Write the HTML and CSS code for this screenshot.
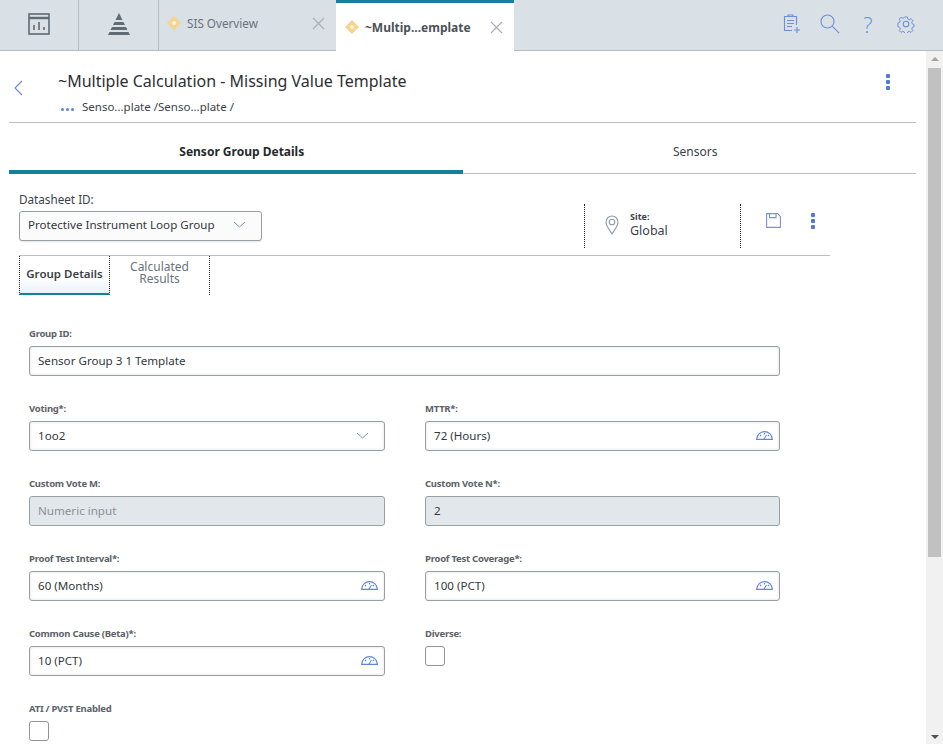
FILE: index.html
```html
<!DOCTYPE html>
<html lang="en">
<head>
    <meta charset="UTF-8">
    <meta name="viewport" content="width=device-width, initial-scale=1.0">
    <title>Sensor Group Details</title>
    <link rel="stylesheet" href="styles.css">
</head>
<body>

    <header class="top-bar">
        <div class="icon-tab">
            <svg width="22" height="22" viewBox="0 0 22 22" fill="none" stroke="#5f6b75" stroke-width="1.6"><rect x="1" y="1" width="20" height="20"/><path d="M1 5h20" stroke-width="2.400"/><path d="M6 17v-5M11 17V9M16 17v-3"/></svg>
        </div>
        <div class="icon-tab icon-tab-second">
            <svg width="24" height="22" viewBox="0 0 24 22" fill="#5f6b75"><path d="M12 0l3.500 7h-7z"/><path d="M7.500 9h9l1.500 3H6zM5 14h14l1.500 3h-17zM2.500 19h19l1.500 3H1z"/></svg>
        </div>
        <div class="doc-tab">
            <svg class="diamond" width="16" height="16" viewBox="0 0 16 16"><path d="M8 1l7 7-7 7-7-7z" fill="#f6d48c"/><circle cx="8" cy="8" r="2" fill="#fdf6e6"/></svg>
            <span class="doc-tab-name">SIS Overview</span>
            <svg class="close-x" width="13" height="13" viewBox="0 0 13 13" stroke="#a9b1b8" stroke-width="1.2"><path d="M1 1l11 11M12 1L1 12"/></svg>
        </div>
        <div class="doc-tab doc-tab-active">
            <svg class="diamond" width="16" height="16" viewBox="0 0 16 16"><path d="M8 1l7 7-7 7-7-7z" fill="#f6d48c"/><circle cx="8" cy="8" r="2" fill="#fdf6e6"/></svg>
            <span class="doc-tab-name">~Multip...emplate</span>
            <svg class="close-x" width="13" height="13" viewBox="0 0 13 13" stroke="#a9b1b8" stroke-width="1.2"><path d="M1 1l11 11M12 1L1 12"/></svg>
        </div>
        <div class="top-actions">
            <span class="top-action"><svg width="18" height="20" viewBox="0 0 18 20" fill="none" stroke="#6c8fd6" stroke-width="1.1"><path d="M9 16.500H1.500V2.500h12V11"/><path d="M5 2.500V1h5v1.500M4 6.500h7M4 9.500h7M4 12.500h5"/><path d="M14 13v6M11 16h6"/></svg></span>
            <span class="top-action"><svg width="20" height="20" viewBox="0 0 20 20" fill="none" stroke="#6c8fd6" stroke-width="1.1"><circle cx="7.500" cy="7.500" r="6.500"/><path d="M12.200 12.200l7 7"/></svg></span>
            <span class="top-action help-mark">?</span>
            <span class="top-action"><svg width="18" height="18" viewBox="0 0 18 18" fill="none" stroke="#6c8fd6" stroke-width="1.1"><circle cx="9" cy="9" r="2.800"/><path d="M7.500 1h3l.5 2.300 1.700.8 2-1.200 2 2.200-1.200 2 .6 1.700 2 .6v2.800l-2 .6-.6 1.700 1.200 2-2 2-2-1.200-1.700.7-.5 2.200h-3l-.5-2.200-1.700-.7-2 1.200-2-2 1.200-2-.7-1.700-2-.6V7.800l2-.6.7-1.700-1.200-2 2-2.200 2 1.200 1.700-.8z" transform="translate(1.100 1.100) scale(.88)"/></svg></span>
        </div>
    </header>

    <div class="page-wrap">
        <main class="content">
            <div class="title-row">
                <svg class="back-arrow" width="10" height="16" viewBox="0 0 10 16" fill="none" stroke="#6c8fd6" stroke-width="1.2"><path d="M9 1L2 8l7 7"/></svg>
                <div class="title-text">
                    <h1>~Multiple Calculation - Missing Value Template</h1>
                    <div class="breadcrumb">
                        <span class="crumb-dots"><i></i><i></i><i></i></span>
                        <span>Senso...plate /Senso...plate /</span>
                    </div>
                </div>
                <span class="kebab kebab-title"><i></i><i></i><i></i></span>
            </div>

            <nav class="main-tabs">
                <div class="main-tab main-tab-active">Sensor Group Details</div>
                <div class="main-tab">Sensors</div>
            </nav>

            <div class="sheet-bar">
                <div class="sheet-select-wrap">
                    <label class="sheet-label">Datasheet ID:</label>
                    <div class="field sheet-select">
                        <span>Protective Instrument Loop Group</span>
                        <svg class="chevron" width="13" height="7" viewBox="0 0 13 7" fill="none" stroke="#7d8fc4" stroke-width="1"><path d="M1 1l5.500 5L12 1"/></svg>
                    </div>
                </div>
                <div class="site-box">
                    <svg width="14" height="20" viewBox="0 0 14 20" fill="none" stroke="#8d9aa6" stroke-width="1.1"><path d="M7 19C4 14 1 11 1 7a6 6 0 0 1 12 0c0 4-3 7-6 12z"/><circle cx="7" cy="7" r="2.800"/></svg>
                    <div>
                        <div class="site-label">Site:</div>
                        <div class="site-value">Global</div>
                    </div>
                </div>
                <div class="sheet-actions">
                    <svg width="15" height="15" viewBox="0 0 15 15" fill="none" stroke="#7f8fdc" stroke-width="1.1"><path d="M.6.6h11l2.800 2.800v11H.6z"/><path d="M3.500.6v4h6.500v-4"/></svg>
                    <span class="kebab"><i></i><i></i><i></i></span>
                </div>
            </div>

            <div class="sub-tabs">
                <div class="sub-tab sub-tab-active">Group Details</div>
                <div class="sub-tab">Calculated<br>Results</div>
            </div>

            <form class="form-grid">
                <div class="form-item form-item-wide">
                    <label>Group ID:</label>
                    <div class="field"><span>Sensor Group 3 1 Template</span></div>
                </div>

                <div class="form-item">
                    <label>Voting*:</label>
                    <div class="field">
                        <span>1oo2</span>
                        <svg class="chevron" width="13" height="7" viewBox="0 0 13 7" fill="none" stroke="#7d8fc4" stroke-width="1"><path d="M1 1l5.500 5L12 1"/></svg>
                    </div>
                </div>
                <div class="form-item">
                    <label>MTTR*:</label>
                    <div class="field">
                        <span>72 (Hours)</span>
                        <svg class="gauge" width="17" height="9" viewBox="0 0 17 9" fill="none" stroke="#5f86dc" stroke-width="1.1"><path d="M.6 8.400C1 3.500 4.500.6 8.500.6s7.500 2.900 7.900 7.800zM4 4l1.200 1M8.500 2v1.500M13 4l-1.200 1M8 8l2.500-4"/></svg>
                    </div>
                </div>

                <div class="form-item">
                    <label>Custom Vote M:</label>
                    <div class="field field-disabled"><span class="placeholder">Numeric input</span></div>
                </div>
                <div class="form-item">
                    <label>Custom Vote N*:</label>
                    <div class="field field-disabled"><span>2</span></div>
                </div>

                <div class="form-item">
                    <label>Proof Test Interval*:</label>
                    <div class="field">
                        <span>60 (Months)</span>
                        <svg class="gauge" width="17" height="9" viewBox="0 0 17 9" fill="none" stroke="#5f86dc" stroke-width="1.1"><path d="M.6 8.400C1 3.500 4.500.6 8.500.6s7.500 2.900 7.900 7.800zM4 4l1.200 1M8.500 2v1.500M13 4l-1.200 1M8 8l2.500-4"/></svg>
                    </div>
                </div>
                <div class="form-item">
                    <label>Proof Test Coverage*:</label>
                    <div class="field">
                        <span>100 (PCT)</span>
                        <svg class="gauge" width="17" height="9" viewBox="0 0 17 9" fill="none" stroke="#5f86dc" stroke-width="1.1"><path d="M.6 8.400C1 3.500 4.500.6 8.500.6s7.500 2.900 7.900 7.800zM4 4l1.200 1M8.500 2v1.500M13 4l-1.200 1M8 8l2.500-4"/></svg>
                    </div>
                </div>

                <div class="form-item">
                    <label>Common Cause (Beta)*:</label>
                    <div class="field">
                        <span>10 (PCT)</span>
                        <svg class="gauge" width="17" height="9" viewBox="0 0 17 9" fill="none" stroke="#5f86dc" stroke-width="1.1"><path d="M.6 8.400C1 3.500 4.500.6 8.500.6s7.500 2.900 7.900 7.800zM4 4l1.200 1M8.500 2v1.500M13 4l-1.200 1M8 8l2.500-4"/></svg>
                    </div>
                </div>
                <div class="form-item">
                    <label>Diverse:</label>
                    <div class="check-box"></div>
                </div>

                <div class="form-item">
                    <label>ATI / PVST Enabled</label>
                    <div class="check-box"></div>
                </div>
            </form>
        </main>

        <div class="scroll-track">
            <span class="scroll-arrow-up"></span>
            <div class="scroll-thumb"></div>
            <span class="scroll-arrow-down"></span>
        </div>
    </div>

</body>
</html>
```

FILE: styles.css
```css
html, body {
    height: 100%;
}

body {
    font-family: "Noto Sans", "Open Sans", sans-serif;
    background-color: #ffffff;
    margin: 0;
    height: 744px;
    overflow: hidden;
    color: #333;
    font-size: 12px;
}

/* top tab strip */
.top-bar {
    display: flex;
    height: 50px;
    background-color: #d9e0e6;
    border-bottom: 1px solid #b4bbc1;
}

.icon-tab {
    width: 78px;
    display: flex;
    align-items: center;
    justify-content: center;
    border-right: 1px solid #b4bbc1;
    padding-bottom: 2px;
}

.icon-tab-second {
    width: 79px;
}

.doc-tab {
    width: 177px;
    display: flex;
    align-items: center;
    padding: 0 11px 4px 7px;
    box-sizing: border-box;
    color: #6a737b;
    font-size: 11.700px;
}

.doc-tab-name {
    margin-left: 5px;
    flex: 1;
}

.doc-tab-active {
    width: 178px;
    height: 51px;
    background-color: #ffffff;
    border-top: 3px solid #14809a;
    color: #4b5259;
    font-size: 12px;
    font-weight: 700;
    padding: 0 11px 0 8px;
}

.diamond {
    flex: none;
}

.top-actions {
    margin-left: auto;
    display: flex;
    align-items: center;
    padding: 0 18px 3px 0;
}

.top-action {
    width: 38px;
    display: flex;
    justify-content: center;
}

.help-mark {
    color: #6c8fd6;
    font-family: "Open Sans", sans-serif;
    font-weight: 300;
    font-size: 22px;
    line-height: 22px;
}

/* page body */
.page-wrap {
    display: flex;
    height: 693px;
}

.content {
    flex: 1;
    min-width: 0;
    padding-left: 9px;
    padding-right: 10px;
}

.title-row {
    display: flex;
    height: 72px;
    border-bottom: 1px solid #bdbdbd;
    box-sizing: border-box;
    padding-top: 19px;
}

.back-arrow {
    margin: 10px 0 0 4px;
    flex: none;
}

.title-text {
    margin-left: 35px;
    flex: 1;
}

h1 {
    margin: 0;
    font-size: 16px;
    font-weight: 400;
    line-height: 22px;
    color: #2b2f33;
}

.breadcrumb {
    display: flex;
    align-items: center;
    margin-top: 8px;
    margin-left: 3px;
    font-size: 11.500px;
    line-height: 14px;
    color: #3c4248;
}

.crumb-dots {
    display: flex;
    gap: 2px;
    margin-right: 8px;
    padding-top: 4px;
}

.crumb-dots i {
    width: 3px;
    height: 3px;
    border-radius: 50%;
    background-color: #5b84d8;
}

.kebab {
    display: inline-flex;
    flex-direction: column;
    gap: 2px;
}

.kebab i {
    width: 4px;
    height: 4px;
    background-color: #4f7ad4;
    border-radius: 1px;
}

.kebab-title {
    margin: 4px 26px 0 0;
    align-self: flex-start;
}

/* main tabs */
.main-tabs {
    display: flex;
    height: 51px;
    border-bottom: 1px solid #bdbdbd;
    box-sizing: border-box;
}

.main-tab {
    flex: 1;
    text-align: center;
    line-height: 58px;
    height: 51px;
    padding-left: 12px;
    box-sizing: border-box;
    font-size: 12px;
    color: #3c4248;
}

.main-tab-active {
    font-weight: 700;
    color: #26292c;
    border-bottom: 4px solid #14809a;
}

/* datasheet row */
.sheet-bar {
    display: flex;
    width: 811px;
    margin-left: 10px;
    height: 82px;
    border-bottom: 1px solid #bdbdbd;
    box-sizing: border-box;
}

.sheet-select-wrap {
    width: 565px;
}

.sheet-label {
    display: block;
    font-size: 11.700px;
    line-height: 16px;
    margin-top: 17px;
    color: #3c4248;
}

.site-box {
    margin-top: 30px;
    width: 157px;
    height: 44px;
    flex: none;
    border-left: 1px dotted #222;
    border-right: 1px dotted #222;
    display: flex;
    align-items: center;
    gap: 11px;
    padding-left: 20px;
    padding-bottom: 2px;
    box-sizing: border-box;
}

.site-label {
    font-size: 9px;
    font-weight: 700;
    line-height: 12px;
    color: #3c4248;
}

.site-value {
    font-size: 12.500px;
    line-height: 16px;
    color: #3c4248;
}

.sheet-actions {
    display: flex;
    gap: 30px;
    margin-left: 25px;
    margin-top: 39px;
    align-items: flex-start;
}

/* inputs */
.field {
    height: 30px;
    display: flex;
    align-items: center;
    justify-content: space-between;
    padding: 0 8px 2px;
    box-sizing: border-box;
    border: 1px solid #9a9fa3;
    border-radius: 3px;
    box-shadow: inset 0 0 3px rgba(0, 0, 0, 0.14);
    background-color: #ffffff;
    font-size: 11.600px;
    color: #33383d;
}

.sheet-select {
    width: 243px;
    margin-top: 4px;
    padding-bottom: 3px;
    background-color: #fbfbfc;
    box-shadow: 0 1px 1px rgba(0, 0, 0, 0.1);
}

.chevron {
    margin-right: 7px;
}

.gauge {
    margin-right: -2px;
}

.field-disabled {
    background-color: #e2e7ec;
    box-shadow: none;
}

.placeholder {
    color: #8b9096;
}

/* inner tabs */
.sub-tabs {
    display: flex;
    margin-left: 10px;
    height: 40px;
}

.sub-tab {
    width: 100px;
    height: 39px;
    border-right: 1px dotted #222;
    box-sizing: border-box;
    display: flex;
    align-items: center;
    justify-content: center;
    text-align: center;
    font-size: 12px;
    line-height: 12px;
    color: #6a737b;
    padding-bottom: 5px;
}

.sub-tab-active {
    width: 91px;
    border-left: 1px dotted #222;
    border-bottom: 2px solid #14809a;
    padding-bottom: 2px;
    font-size: 11.500px;
    color: #3c4248;
    font-weight: 600;
    background: linear-gradient(#ffffff 60%, #e9f1f9);
}

/* form */
.form-grid {
    display: grid;
    grid-template-columns: 356px 355px;
    column-gap: 40px;
    grid-auto-rows: 75px;
    margin: 31px 0 0 20px;
}

.form-item-wide {
    grid-column: 1 / 3;
}

.form-item label {
    display: block;
    font-size: 9.500px;
    font-weight: 700;
    letter-spacing: -0.25px;
    line-height: 14px;
    color: #5c6268;
    margin-bottom: 5px;
}

.check-box {
    width: 20px;
    height: 20px;
    border: 1px solid #8f9498;
    border-radius: 3px;
    box-sizing: border-box;
    background-color: #ffffff;
    margin-top: 1px;
}

/* scrollbar */
.scroll-track {
    width: 17px;
    flex: none;
    background-color: #f1f1f1;
    position: relative;
}

.scroll-thumb {
    position: absolute;
    left: 2px;
    top: 17px;
    width: 13px;
    height: 489px;
    background-color: #c1c1c1;
}

.scroll-arrow-up,
.scroll-arrow-down {
    position: absolute;
    left: 5px;
    width: 0;
    height: 0;
    border-left: 4px solid transparent;
    border-right: 4px solid transparent;
}

.scroll-arrow-up {
    top: 6px;
    border-bottom: 4px solid #a3a3a3;
}

.scroll-arrow-down {
    bottom: 5px;
    border-top: 4px solid #505050;
}
```
